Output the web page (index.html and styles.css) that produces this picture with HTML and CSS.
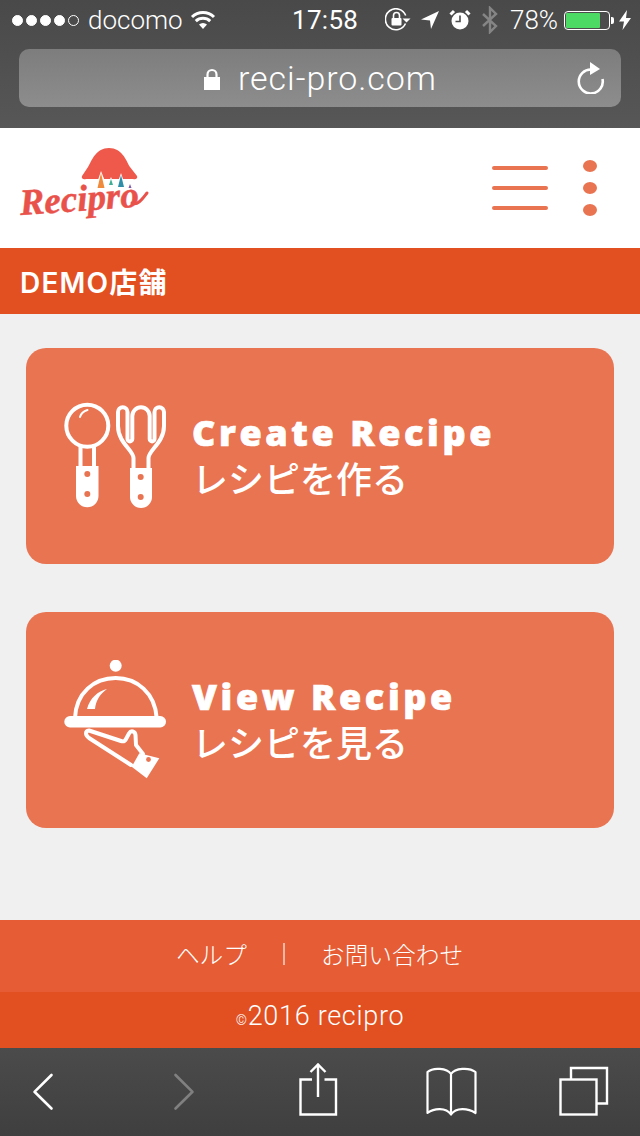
FILE: index.html
```html
<!DOCTYPE html>
<html lang="ja">
<head>
<meta charset="utf-8">
<title>Recipro</title>
<link rel="stylesheet" href="styles.css">
</head>
<body>
<div class="page">
  <div class="chrome">
    <div class="status">
      <div class="signal"><i></i><i></i><i></i><i></i><i class="off"></i></div>
      <span class="carrier">docomo</span>
      <svg class="wifi" viewBox="0 0 26 20" width="26" height="20"><path d="M13 19 L9 14.6 A6 6 0 0 1 17 14.6 Z" fill="#fff"/><path d="M5.8 11.2 A10.4 10.4 0 0 1 20.2 11.2" class="st"/><path d="M2 7 A15.6 15.6 0 0 1 24 7" class="st"/></svg>
      <span class="time">17:58</span>
      <svg class="rot" viewBox="0 0 26 24" width="26" height="24"><path d="M20.5 15.5 A10.5 10.5 0 1 1 20.7 7.5" class="st thin"/><path d="M17.5 10.5 L25.5 10.5 L21.5 14.5 Z" fill="#fff"/><rect x="6.5" y="10" width="10" height="7.5" rx="1" fill="#fff"/><path d="M8.5 10 V7.5 A3 3 0 0 1 14.5 7.5 V10" class="st thin"/></svg>
      <svg class="loc" viewBox="0 0 20 20" width="20" height="20"><path d="M19 1 L1 9.5 L10 10.5 L11 19 Z" fill="#fff"/></svg>
      <svg class="alarm" viewBox="0 0 22 22" width="22" height="22"><circle cx="11" cy="12" r="8.5" fill="#fff"/><path d="M11 6.5 V12.5 H6.5" fill="none" stroke="#4c4c4c" stroke-width="1.6"/><path d="M1.5 5.5 L5 2 M20.5 5.5 L17 2" class="st"/></svg>
      <svg class="bt" viewBox="0 0 16 28" width="16" height="28"><path d="M1 8 L14 20 L8 26 V2 L14 8 L1 20" fill="none" stroke="#858585" stroke-width="2.4"/></svg>
      <span class="pct">78%</span>
      <div class="battery"><div class="cell"><div class="charge"></div></div><div class="nub"></div></div>
      <svg class="bolt" viewBox="0 0 12 20" width="12" height="20"><path d="M8 0 L0 11.5 H5 L3.5 20 L12 8 H7 Z" fill="#fff"/></svg>
    </div>
    <div class="urlbar">
      <div class="address">
        <svg class="lock" viewBox="0 0 18 22" width="18" height="22"><rect x="1" y="9" width="16" height="13" fill="#fff"/><path d="M4.5 9 V6.5 A4.5 4.5 0 0 1 13.5 6.5 V9" fill="none" stroke="#fff" stroke-width="2.2"/></svg>
        <span>reci-pro.com</span>
      </div>
      <svg class="reload" viewBox="0 0 30 32" width="30" height="32"><path d="M15.5 7.5 A12 12 0 1 0 26.5 17" fill="none" stroke="#fff" stroke-width="2.6"/><path d="M14 0 L24 7 L14 13 Z" fill="#fff"/></svg>
    </div>
  </div>

  <header class="site-header">
    <div class="logo">
      <svg class="logo-mark" viewBox="0 0 130 84" width="130" height="84">
        <path d="M69 21 C73 14 77 2 90 2 C103 2 107 14 111 21 L118 30 C119 32 117 34 114 33 L67 33 C64 34 62 32 63 30 Z" fill="#ee594b"/>
        <path d="M82 25 L76 43 H89 Z" fill="#fff"/><path d="M82 27 L78.5 42 H85.5 Z" fill="#f08a3c"/>
        <path d="M92 31 L88 40 H96 Z" fill="#fff"/><path d="M92 33 L90 39 H94 Z" fill="#3fae95"/>
        <path d="M102 27 L97 42 H107 Z" fill="#fff"/><path d="M102 29 L99 41 H105 Z" fill="#2f8fa8"/>
        <path d="M111 38 L109.5 42 H112.5 Z" fill="#7e5aa8"/>
        <text class="logo-text" x="1" y="65" transform="rotate(-4 60 60)">Recipro</text>
        <path d="M113 57 C119 60 124 52 128 47" fill="none" stroke="#e9524b" stroke-width="3" stroke-linecap="round"/>
      </svg>
    </div>
    <div class="header-actions">
      <div class="burger"><i></i><i></i><i></i></div>
      <div class="kebab"><i></i><i></i><i></i></div>
    </div>
  </header>

  <div class="shop-title">DEMO店舗</div>

  <main class="content">
    <a class="card">
      <svg class="card-icon" viewBox="60 396 110 120" width="110" height="120">
        <circle cx="87.3" cy="425.7" r="21" class="w4"/>
        <path d="M80 417 C81 413 84 411 87.5 410" class="w2"/>
        <path d="M80.5 446 V468 M94 446 V468" class="w4"/>
        <path d="M76 466 H98.5 V496 A11.2 11.2 0 0 1 76 496 Z" fill="#fff"/>
        <circle cx="87.3" cy="474" r="3" class="hole"/><circle cx="87.3" cy="494" r="3" class="hole"/>
        <path d="M133.5 469 V458 C133.5 450 118 443 118 426 V412 A4.75 4.75 0 0 1 127.5 412 V439 A2.4 2.4 0 0 0 132.3 439 V416 A8.7 8.7 0 0 1 149.7 416 V439 A2.4 2.4 0 0 0 154.5 439 V412 A4.75 4.75 0 0 1 164 412 V426 C164 443 148.5 450 148.5 458 V469" class="w4"/>
        <path d="M130 468 H152 V497 A11 11 0 0 1 130 497 Z" fill="#fff"/>
        <circle cx="140.7" cy="477" r="3" class="hole"/><circle cx="140.7" cy="497" r="3" class="hole"/>
      </svg>
      <div class="card-text"><span class="en">Create Recipe</span><span class="ja">レシピを作る</span></div>
    </a>
    <a class="card">
      <svg class="card-icon" viewBox="60 660 110 120" width="110" height="120">
        <circle cx="115.7" cy="665.7" r="6" fill="#fff"/>
        <path d="M75 718 C76 693 94 678 115.7 678 C137 678 155 693 156.7 718" class="w4"/>
        <path d="M107 690 C98 692 90 699 87 710 H95 C96 702 99 696 107 690 Z" fill="#fff" transform="translate(0,-1)"/>
        <rect x="64.3" y="716" width="101.7" height="11.5" rx="5.7" fill="#fff"/>
        <path d="M131 765 L89 738 C85 735 85 731 89 730.5 L121 741 C124 742 125 741 126 739 L129 733.5 C131 730 135 731 135.5 735 L136 745 L143 754" class="w4" stroke-linejoin="round"/>
        <path d="M139.3 753.3 L159.3 758.3 L146.7 778.3 L131.7 766.7 Z" fill="#fff"/>
        <circle cx="148.5" cy="759.5" r="2.4" class="hole"/>
      </svg>
      <div class="card-text"><span class="en">View Recipe</span><span class="ja">レシピを見る</span></div>
    </a>
  </main>

  <footer class="site-footer">
    <nav class="footer-links"><a>ヘルプ</a><span class="sep"></span><a>お問い合わせ</a></nav>
    <div class="copyright"><small>©</small>2016 recipro</div>
  </footer>

  <div class="toolbar">
    <svg viewBox="13 1048 60 88" width="60" height="88"><path d="M51.5 1075 L34.5 1091.8 L51.5 1108.5" class="tb"/></svg>
    <svg viewBox="148 1048 60 88" width="60" height="88"><path d="M175.5 1075 L192.5 1091.8 L175.5 1108.5" class="tb dim"/></svg>
    <svg viewBox="283 1048 60 88" width="60" height="88"><path d="M312 1079.5 H300.5 V1114.5 H336 V1079.5 H324.5 M318 1097 V1064.5 M310.5 1072 L318 1064.5 L325.5 1072" class="tb sq"/></svg>
    <svg viewBox="418 1048 60 88" width="60" height="88"><path d="M451 1074 C447 1068 433 1067 427.5 1072 V1113 C434 1108 446 1107 451 1114.5 C456 1107 468 1108 475.5 1113 V1072 C469 1067 455 1068 451 1074 V1114" class="tb thin2"/></svg>
    <svg viewBox="553 1048 60 88" width="60" height="88"><rect x="560.5" y="1079.5" width="36" height="35" class="tb sq"/><path d="M571 1079 V1068 H607 V1103.5 H597" class="tb sq"/></svg>
  </div>
</div>
</body>
</html>
```
FILE: styles.css
```css
* { box-sizing: border-box; }
html, body { margin: 0; padding: 0; }
body { font-family: "Noto Sans CJK JP", "Liberation Sans", sans-serif; background: #f0f0f0; }
.page { width: 640px; height: 1136px; display: flex; flex-direction: column; overflow: hidden; }

.chrome { height: 128px; background: linear-gradient(#494949, #575757); color: #fff; flex: none; }
.st { fill: none; stroke: #fff; stroke-width: 3; }
.st.thin { stroke-width: 1.6; }
.status { height: 40px; display: flex; align-items: center; padding-left: 12px; font-family: Roboto, "Liberation Sans", sans-serif; font-weight: 300; font-size: 26px; }
.signal { display: flex; gap: 3px; width: 68px; }
.signal i { width: 11px; height: 11px; border-radius: 50%; background: #fff; border: 1px solid #fff; }
.signal i.off { background: none; }
.carrier { margin-left: 8px; width: 90px; }
.wifi { margin-left: 12px; }
.time { margin-left: 76px; font-weight: 400; letter-spacing: .3px; width: 66px; }
.rot { margin-left: 27px; }
.loc { margin-left: 9px; }
.alarm { margin-left: 9px; }
.bt { margin-left: 11px; }
.pct { margin-left: 12px; width: 50px; }
.battery { display: flex; align-items: center; margin-left: 4px; }
.cell { width: 46px; height: 19px; border: 1px solid #fff; border-radius: 4px; padding: 1px; }
.charge { width: 34px; height: 15px; background: #4cd964; border-radius: 1px; }
.nub { width: 3px; height: 7px; background: #fff; margin-left: 1px; border-radius: 0 2px 2px 0; }
.bolt { margin-left: 5px; }

.urlbar { margin: 9px 19px 0; height: 58px; border-radius: 10px; background: linear-gradient(#7d7d7d, #8d8d8d); display: flex; align-items: center; padding-right: 15px; }
.address { flex: 1; display: flex; align-items: center; padding-left: 184px; gap: 17px; font-family: Roboto, "Liberation Sans", sans-serif; font-weight: 300; font-size: 34px; letter-spacing: .95px; }
.lock { margin-top: 1px; }

.site-header { height: 120px; background: #fff; flex: none; display: flex; align-items: center; justify-content: space-between; padding: 0 43px 0 19px; }
.logo { display: flex; }
.logo-mark { overflow: visible; }
.logo-text { font-family: "Liberation Serif", serif; font-style: italic; font-weight: 700; font-size: 37px; fill: #e9524b; stroke: #e9524b; stroke-width: .5; }
.header-actions { display: flex; align-items: center; gap: 35px; }
.burger { display: flex; flex-direction: column; gap: 16px; width: 56px; }
.burger i { height: 4px; border-radius: 2px; background: #e97452; }
.kebab { display: flex; flex-direction: column; gap: 10px; }
.kebab i { width: 14px; height: 12px; border-radius: 50%; background: #e97452; }

.shop-title { height: 66px; background: #e25022; color: #fff; flex: none; display: flex; align-items: center; padding-left: 20px; font-family: Inter, "Noto Sans CJK JP", sans-serif; font-size: 28px; font-weight: 600; letter-spacing: 1.2px; }

.content { flex: 1; padding: 34px 26px 0; display: flex; flex-direction: column; gap: 48px; background: #f0f0f0; }
.card { height: 216px; border-radius: 20px; background: #e97452; display: flex; align-items: center; padding-left: 34px; gap: 22px; color: #fff; }
.card-text { display: flex; flex-direction: column; padding-bottom: 2px; }
.en { font-family: "Open Sans", sans-serif; font-weight: 800; font-size: 36px; line-height: 44px; letter-spacing: 3.6px; -webkit-text-stroke: .7px #fff; }
.ja { font-weight: 500; font-size: 36px; line-height: 44px; }
.w4 { fill: none; stroke: #fff; stroke-width: 4; stroke-linecap: round; }
.w2 { fill: none; stroke: #fff; stroke-width: 2; stroke-linecap: round; }
.hole { fill: #e97452; }

.site-footer { flex: none; color: #fff; }
.footer-links { height: 72px; background: #e55c35; display: flex; align-items: center; justify-content: center; gap: 36px; font-size: 23.7px; font-weight: 300; padding-bottom: 4px; padding-right: 1px; }
.sep { width: 2px; height: 22px; background: rgba(255,255,255,.55); }
.copyright { height: 56px; background: #e25022; display: flex; align-items: baseline; justify-content: center; padding-top: 8px; font-family: Roboto, "Liberation Sans", sans-serif; font-weight: 300; font-size: 27px; letter-spacing: .7px; }
.copyright small { font-size: 14px; }

.toolbar { height: 88px; flex: none; background: linear-gradient(#4b4b4b, #3f3f3f); display: flex; justify-content: space-between; padding: 0 27px 0 13px; }
.tb { fill: none; stroke: #fff; stroke-width: 2.6; stroke-linecap: round; stroke-linejoin: round; }
.tb.dim { stroke: #808080; }
.tb.sq { stroke-linecap: butt; stroke-linejoin: miter; stroke-width: 2.4; }
.tb.thin2 { stroke-width: 2.2; }
```
